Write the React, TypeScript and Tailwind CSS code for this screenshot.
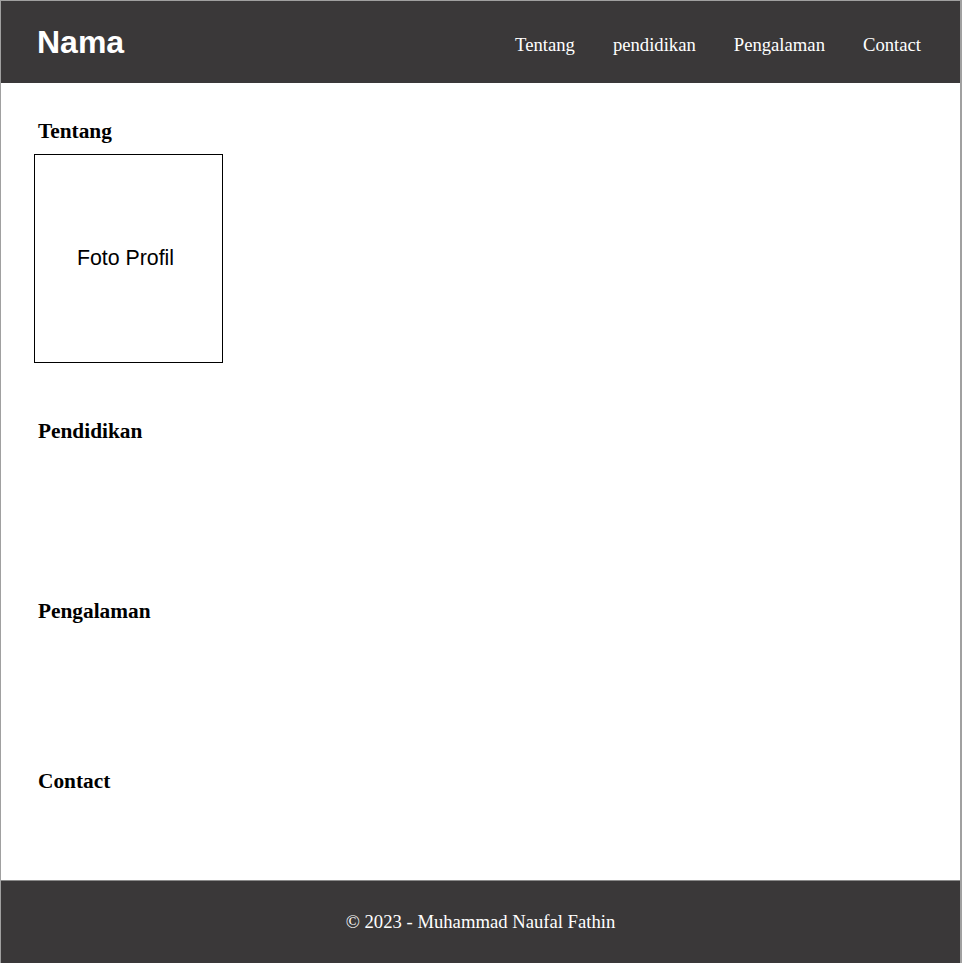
export default function App() {
  const serif = { fontFamily: '"Liberation Serif", "Times New Roman", serif' }
  return (
    <div className="w-[962px] h-[963px] border-l border-t border-r-2 border-[#a0a0a0] flex flex-col bg-white overflow-hidden">
      <header className="h-[82px] shrink-0 bg-[#3a3839] flex items-center justify-between pl-[36px] pr-[39px]">
        <span className="text-white font-bold text-[32px] leading-none" style={{ fontFamily: '"Liberation Sans", Arial, sans-serif' }}>
          Nama
        </span>
        <nav className="flex items-center gap-[38px] pt-[5px] text-white text-[18.67px]" style={serif}>
          <a href="#tentang">Tentang</a>
          <a href="#pendidikan">pendidikan</a>
          <a href="#pengalaman">Pengalaman</a>
          <a href="#contact">Contact</a>
        </nav>
      </header>

      <main className="flex-1 pl-[36px] pt-[36px]" style={serif}>
        <section id="tentang">
          <h2 className="text-[21.33px] font-bold leading-[24px] pl-[1px] text-black">Tentang</h2>
          <div className="mt-[11px] -ml-[3px] w-[189px] h-[209px] border border-black flex items-center justify-center pr-[6px]">
            <span className="text-[21.33px] text-black" style={{ fontFamily: '"Liberation Sans", Arial, sans-serif' }}>
              Foto Profil
            </span>
          </div>
        </section>

        <section id="pendidikan" className="mt-[56px]">
          <h2 className="text-[21.33px] font-bold leading-[24px] pl-[1px] text-black">Pendidikan</h2>
        </section>

        <section id="pengalaman" className="mt-[156px]">
          <h2 className="text-[21.33px] font-bold leading-[24px] pl-[1px] text-black">Pengalaman</h2>
        </section>

        <section id="contact" className="mt-[146px]">
          <h2 className="text-[21.33px] font-bold leading-[24px] pl-[1px] text-black">Contact</h2>
        </section>
      </main>

      <footer className="h-[83px] shrink-0 border-t border-[#8a8a8a] bg-[#3a3839] flex items-center justify-center">
        <p className="text-white text-[18.67px]" style={serif}>
          © 2023 - Muhammad Naufal Fathin
        </p>
      </footer>
    </div>
  )
}
